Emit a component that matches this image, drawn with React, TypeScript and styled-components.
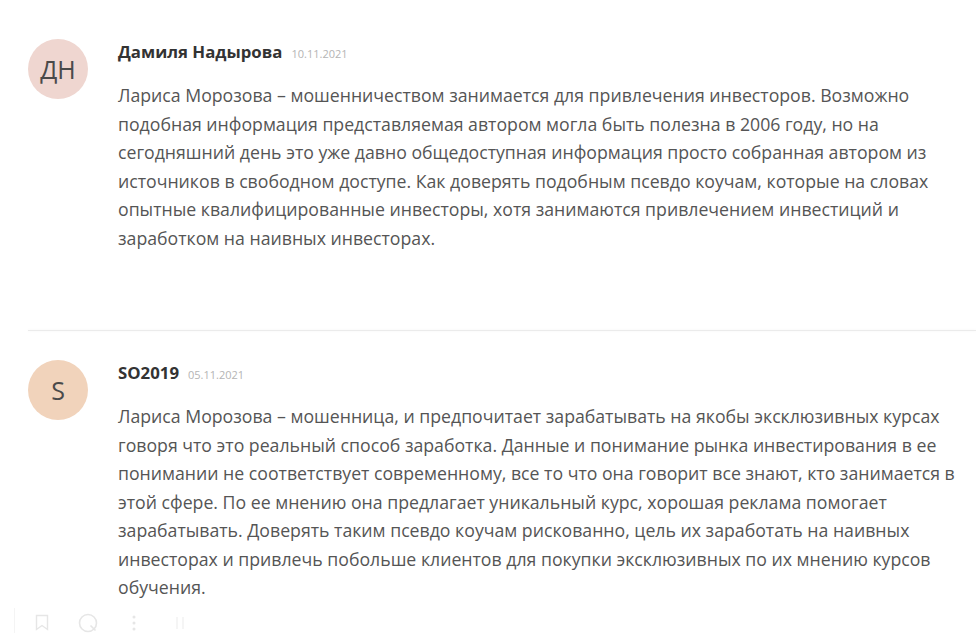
import React from 'react';
import styled, { createGlobalStyle } from 'styled-components';

type CommentType = {
  initials: string;
  tint: string;
  author: string;
  date: string;
  lines: string[];
};

const comments: CommentType[] = [
  {
    initials: 'ДН',
    tint: '#efd6d0',
    author: 'Дамиля Надырова',
    date: '10.11.2021',
    lines: [
      'Лариса Морозова – мошенничеством занимается для привлечения инвесторов. Возможно',
      'подобная информация представляемая автором могла быть полезна в 2006 году, но на',
      'сегодняшний день это уже давно общедоступная информация просто собранная автором из',
      'источников в свободном доступе. Как доверять подобным псевдо коучам, которые на словах',
      'опытные квалифицированные инвесторы, хотя занимаются привлечением инвестиций и',
      'заработком на наивных инвесторах.',
    ],
  },
  {
    initials: 'S',
    tint: '#f1d3bb',
    author: 'SO2019',
    date: '05.11.2021',
    lines: [
      'Лариса Морозова – мошенница, и предпочитает зарабатывать на якобы эксклюзивных курсах',
      'говоря что это реальный способ заработка. Данные и понимание рынка инвестирования в ее',
      'понимании не соответствует современному, все то что она говорит все знают, кто занимается в',
      'этой сфере. По ее мнению она предлагает уникальный курс, хорошая реклама помогает',
      'зарабатывать. Доверять таким псевдо коучам рискованно, цель их заработать на наивных',
      'инвесторах и привлечь побольше клиентов для покупки эксклюзивных по их мнению курсов',
      'обучения.',
    ],
  },
];

export default function App() {
  return (
    <>
      <GlobalStyle />
      <Page>
        {comments.map((c, i) => (
          <React.Fragment key={i}>
            {i > 0 && <Divider />}
            <Comment>
              <Avatar $tint={c.tint}>{c.initials}</Avatar>
              <Content>
                <Header>
                  <Author>{c.author}</Author>
                  <DateLabel>{c.date}</DateLabel>
                </Header>
                <Body>
                  {c.lines.map((line, j) => (
                    <Line key={j}>{line}</Line>
                  ))}
                </Body>
              </Content>
            </Comment>
          </React.Fragment>
        ))}
        <Actions>
          <ActionIcon>
            <svg width="14" height="17" viewBox="0 0 14 17" fill="none" stroke="currentColor" strokeWidth="1.4">
              <path d="M1.5 1.5h11v14L7 11.5l-5.5 4z" />
            </svg>
          </ActionIcon>
          <ActionIcon>
            <svg width="22" height="22" viewBox="0 0 22 22" fill="none" stroke="currentColor" strokeWidth="1.6">
              <circle cx="11" cy="11" r="8.5" />
              <path d="M13.5 13.5l5 5" />
            </svg>
          </ActionIcon>
          <ActionIcon>
            <svg width="4" height="18" viewBox="0 0 4 18" fill="currentColor">
              <circle cx="2" cy="3" r="1.5" />
              <circle cx="2" cy="9" r="1.5" />
              <circle cx="2" cy="15" r="1.5" />
            </svg>
          </ActionIcon>
          <ActionIcon $faint>
            <svg width="10" height="18" viewBox="0 0 10 18" fill="none" stroke="currentColor" strokeWidth="1.4">
              <path d="M2 3v12M8 3v12" />
            </svg>
          </ActionIcon>
        </Actions>
      </Page>
    </>
  );
}

const GlobalStyle = createGlobalStyle`
  html, body {
    margin: 0;
    padding: 0;
    background: #ffffff;
  }
  body {
    font-family: 'Open Sans', 'Liberation Sans', sans-serif;
    overflow: hidden;
  }
`;

const Page = styled.div`
  width: 976px;
  height: 633px;
  padding: 42px 0 0 28px;
  box-sizing: border-box;
  overflow: hidden;
`;

const Comment = styled.div`
  display: flex;
  gap: 30px;
`;

const Avatar = styled.div<{ $tint: string }>`
  flex: none;
  width: 60px;
  height: 60px;
  margin-top: -3px;
  border-radius: 50%;
  background: ${(p) => p.$tint};
  color: #4a4a4a;
  font-size: 25px;
  display: flex;
  align-items: center;
  justify-content: center;
`;

const Content = styled.div`
  display: flex;
  flex-direction: column;
  gap: 19px;
`;

const Header = styled.div`
  display: flex;
  align-items: baseline;
  gap: 9px;
  height: 20px;
  line-height: 20px;
`;

const Author = styled.span`
  font-size: 16.8px;
  font-weight: 700;
  color: #333333;
`;

const DateLabel = styled.span`
  font-size: 11px;
  color: #b4b4b4;
`;

const Body = styled.div`
  font-size: 17.7px;
  line-height: 28.5px;
  color: #555555;
`;

const Line = styled.div`
  white-space: nowrap;
`;

const Divider = styled.div`
  height: 1px;
  margin: 78px 0 32px;
  background: #ebebeb;
  box-shadow: 0 0 3px rgba(0, 0, 0, 0.06);
`;

const Actions = styled.div`
  display: flex;
  align-items: center;
  gap: 24px;
  margin: 6px 0 0 -14px;
  padding: 4px 0 4px 16px;
  border-left: 1px solid #f4f4f4;
  color: #e6e6e6;
`;

const ActionIcon = styled.span<{ $faint?: boolean }>`
  display: flex;
  align-items: center;
  justify-content: center;
  width: 22px;
  height: 22px;
  opacity: ${(p) => (p.$faint ? 0.5 : 1)};
`;
